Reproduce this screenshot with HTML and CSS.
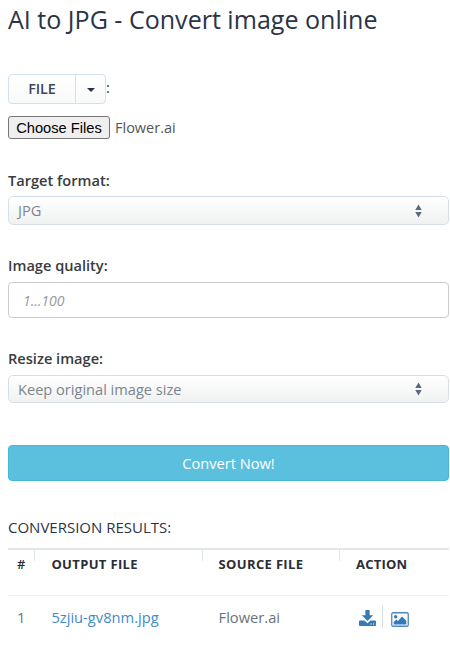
FILE: index.html
```html
<!DOCTYPE html>
<html lang="en">
<head>
<meta charset="utf-8">
<title>AI to JPG - Convert image online</title>
<link rel="stylesheet" href="styles.css">
</head>
<body>
<main class="converter">
  <h1 class="title"><span>AI to JPG - Convert image online</span></h1>
  <div class="source">
    <div class="split">
      <button class="split-main" type="button"><span>FILE</span></button>
      <button class="split-toggle" type="button" aria-label="Source"><i class="caret"></i></button>
    </div>
    <span class="colon">:</span>
  </div>
  <div class="picker">
    <button class="choose" type="button"><span>Choose Files</span></button>
    <span class="filename">Flower.ai</span>
  </div>
  <section class="field field-format">
    <div class="label"><span>Target format:</span></div>
    <div class="select"><span>JPG</span>
      <svg class="sort" viewBox="0 0 7 14"><path d="M3.5 .5 6.7 6H.3zM.3 8h6.4L3.5 13.5z"/></svg>
    </div>
  </section>
  <section class="field field-quality">
    <div class="label"><span>Image quality:</span></div>
    <input class="input" type="text" placeholder="1...100">
  </section>
  <section class="field field-resize">
    <div class="label"><span>Resize image:</span></div>
    <div class="select"><span>Keep original image size</span>
      <svg class="sort" viewBox="0 0 7 14"><path d="M3.5 .5 6.7 6H.3zM.3 8h6.4L3.5 13.5z"/></svg>
    </div>
  </section>
  <button class="convert" type="button"><span>Convert Now!</span></button>
  <h2 class="results-title"><span>CONVERSION RESULTS:</span></h2>
  <div class="table">
    <div class="row head">
      <div class="cell"><span>#</span></div>
      <div class="cell"><span>OUTPUT FILE</span></div>
      <div class="cell"><span>SOURCE FILE</span></div>
      <div class="cell"><span>ACTION</span></div>
    </div>
    <div class="row">
      <div class="cell"><span>1</span></div>
      <div class="cell"><a class="link"><span>5zjiu-gv8nm.jpg</span></a></div>
      <div class="cell"><span>Flower.ai</span></div>
      <div class="cell actions">
        <svg class="download" viewBox="0 0 17 16"><path d="M6.4 0h4.2v5.2h3.6L8.5 11 2.800 5.200h3.600z"/><path fill-rule="evenodd" d="M1 10.500h4.400l3.100 2.800 3.100-2.800H16q1 0 1 1V15q0 1-1 1H1q-1 0-1-1v-3.500q0-1 1-1zM11.500 13.400v1.200h1.200v-1.200zM14 13.400v1.200h1.200v-1.200z"/></svg>
        <i class="divider"></i>
        <svg class="picture" viewBox="0 0 18 15"><rect x=".75" y=".75" width="16.500" height="13.500" rx="1.300" fill="#fff" stroke="#4d88c2" stroke-width="1.300"/><circle cx="4.700" cy="4.800" r="1.700"/><path d="M2.700 12.500V10l2.700-2.600L7 9l4-4.500 4.300 4.300v3.700z"/></svg>
      </div>
    </div>
  </div>
</main>
</body>
</html>
```
FILE: styles.css
```css
* { box-sizing: border-box; }
body { margin: 0; background: #fff; font: 14.7px/20px "Open Sans", sans-serif; color: #6b737c; }
button { margin: 0; padding: 0; font: inherit; }
.converter { width: 441px; margin-left: 8px; padding-top: 3px; }
.title { margin: 0; font-size: 25.05px; line-height: 32px; font-weight: 400; color: #2b3447; white-space: nowrap; }
.source { display: flex; height: 30px; margin-top: 39px; }
.split { display: flex; width: 98px; border: 1px solid #d3e0ed; border-radius: 4px; background: linear-gradient(#fff, #f8f9fa); }
.split-main { width: 67px; border: 0; border-right: 1px solid #d3e0ed; background: none; font-size: 14.3px; font-weight: 600; color: #3c4658; }
.split-toggle { display: flex; flex: 1; align-items: center; justify-content: center; border: 0; background: none; }
.caret { margin-top: 2px; border: 4px solid transparent; border-top-color: #2b3447; border-bottom: 0; }
.colon { margin-left: 0; line-height: 27px; color: #333; }
.picker { display: flex; align-items: center; height: 23px; margin-top: 12px; }
.choose { width: 102px; height: 23px; border: 1px solid #767676; border-radius: 3px; background: #efefef; font: 14.67px/20px "Liberation Sans", sans-serif; color: #000; }
.filename { margin-left: 5px; font-size: 14.5px; color: #555; }
.label { height: 20px; line-height: 18px; font-size: 14.6px; font-weight: 600; color: #383b40; }
.field-format { margin-top: 32px; }
.select { display: flex; align-items: center; justify-content: space-between; height: 29px; margin-top: 5px; padding: 0 26px 0 9px; border: 1px solid #d3e0ec; border-radius: 5px; background: linear-gradient(#fff, #f0f1f1); color: #7c858e; font-size: 14.6px; }
.field-format .select > span { margin-top: -1px; }
.sort { width: 7px; height: 14px; fill: #5c6880; }
.field-quality { margin-top: 31px; }
.input { display: block; width: 100%; height: 36px; margin-top: 6px; padding: 0 14px; border: 1px solid #ccc; border-radius: 4px; font: 14px "Open Sans", sans-serif; }
.input::placeholder { color: #999; font-style: italic; opacity: 1; }
.field-resize { margin-top: 31px; }
.field-resize .select { height: 28px; margin-top: 6px; }
.convert { display: block; width: 100%; height: 36px; margin-top: 42px; padding-bottom: 1px; border: 1px solid #46b8da; border-radius: 4px; background: #5bc0de; color: #fff; font-size: 14.6px; }
.results-title { margin: 36px 0 0; font-size: 15px; line-height: 20px; font-weight: 400; color: #2b3447; }
.table { margin-top: 11px; border-top: 2px solid #e5e6e8; }
.row { display: grid; grid-template-columns: 27.4px 167.2px 137.5px 1fr; height: 44px; }
.cell { padding: 11px 0 0 16px; }
.cell:first-child { padding-left: 9px; }
.head { height: 46px; border-bottom: 1px solid #eef3f8; color: #292d36; font-size: 13px; letter-spacing: .35px; font-weight: 700; }
.head .cell { height: 11px; padding-top: 4px; border-right: 1px solid #dce5ee; }
.head .cell:first-child { font-weight: 600; }
.head .cell:last-child { border: 0; letter-spacing: .2px; }
.link { color: #428bca; }
.actions { display: flex; align-items: flex-start; padding-top: 9px; padding-left: 19px; }
.download, .picture { fill: #337ab7; }
.download { width: 17px; height: 16px; margin-top: 5px; }
.divider { width: 1px; height: 23px; margin-left: 6px; background: #d3dfeb; }
.picture { width: 18px; height: 15px; margin: 7px 0 0 8px; }
```
